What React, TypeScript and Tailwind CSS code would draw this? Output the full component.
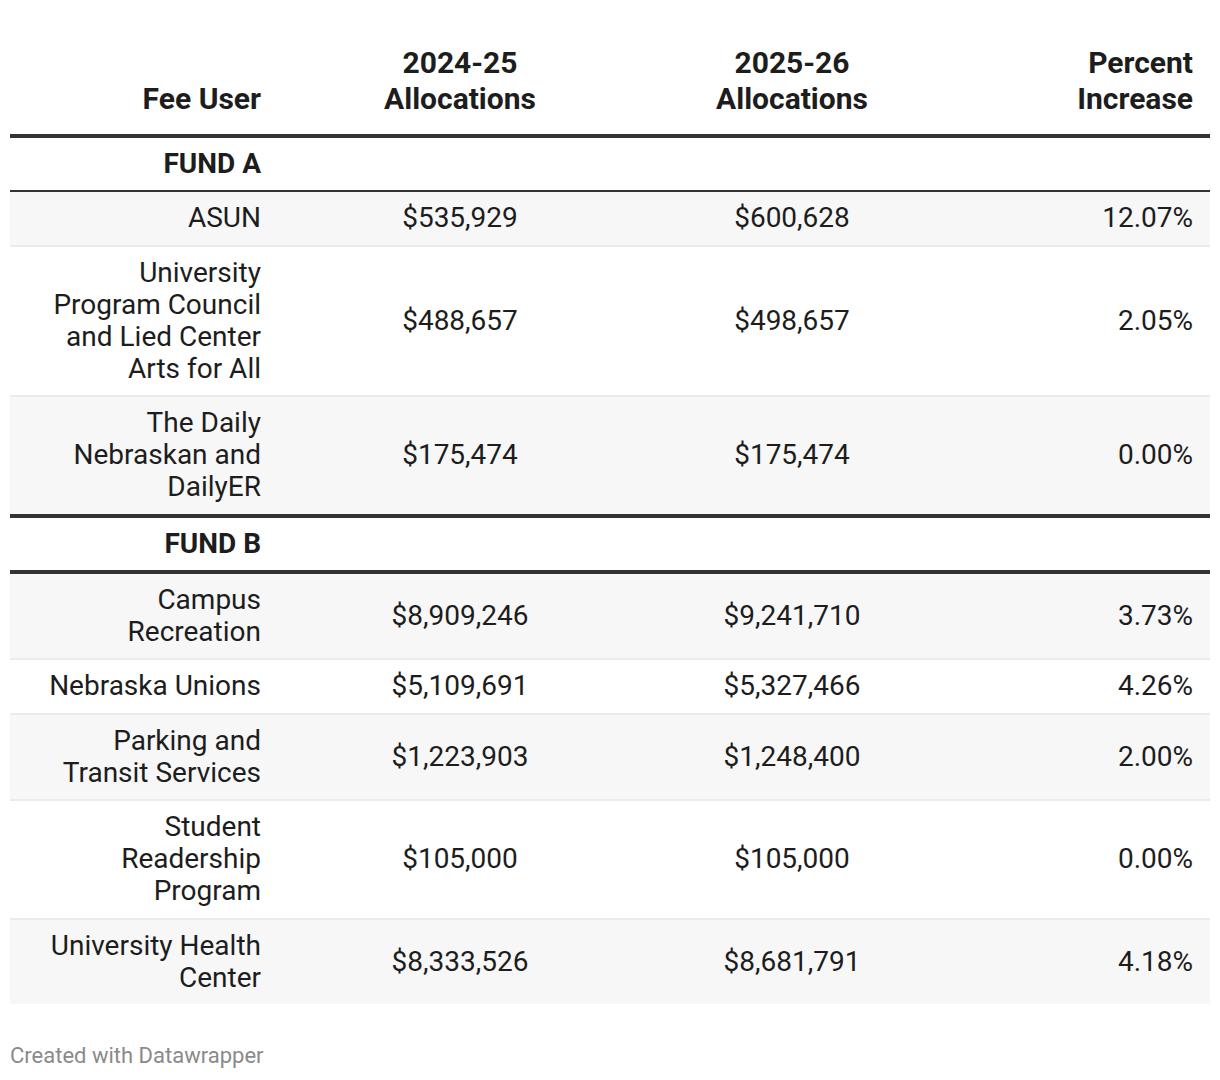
import React from "react";

type Row = { user: string[]; a: string; b: string; pct: string };

const fundA: Row[] = [
  { user: ["ASUN"], a: "$535,929", b: "$600,628", pct: "12.07%" },
  { user: ["University", "Program Council", "and Lied Center", "Arts for All"], a: "$488,657", b: "$498,657", pct: "2.05%" },
  { user: ["The Daily", "Nebraskan and", "DailyER"], a: "$175,474", b: "$175,474", pct: "0.00%" },
];

const fundB: Row[] = [
  { user: ["Campus", "Recreation"], a: "$8,909,246", b: "$9,241,710", pct: "3.73%" },
  { user: ["Nebraska Unions"], a: "$5,109,691", b: "$5,327,466", pct: "4.26%" },
  { user: ["Parking and", "Transit Services"], a: "$1,223,903", b: "$1,248,400", pct: "2.00%" },
  { user: ["Student", "Readership", "Program"], a: "$105,000", b: "$105,000", pct: "0.00%" },
  { user: ["University Health", "Center"], a: "$8,333,526", b: "$8,681,791", pct: "4.18%" },
];

const cols = "grid grid-cols-[284px_332px_332px_252px]";

function DataRow({ row, i, last }: { row: Row; i: number; last: boolean }) {
  return (
    <div
      className={`${cols} items-center text-[28px] leading-[32px] ${i % 2 === 0 ? "bg-[#f7f7f7]" : "bg-white"} ${last ? "" : "border-b-2 border-[#ebebeb]"}`}
    >
      <div className="py-[10.25px] pr-[33px] text-right whitespace-nowrap">
        {row.user.map((l) => (
          <div key={l}>{l}</div>
        ))}
      </div>
      <div className="text-center">{row.a}</div>
      <div className="text-center">{row.b}</div>
      <div className="text-right pr-[17px]">{row.pct}</div>
    </div>
  );
}

function FundHeader({ label }: { label: string }) {
  return (
    <div className={`${cols} text-[28px] leading-[32px] font-bold`}>
      <div className="py-[10px] pr-[33px] text-right">{label}</div>
      <div />
      <div />
      <div />
    </div>
  );
}

export default function App() {
  return (
    <div className="bg-white w-[1220px] h-[1080px] px-[10px] pt-[45px] text-[#1d1d1d]" style={{ fontFamily: "Roboto, 'Liberation Sans', sans-serif" }}>
      <div className={`${cols} items-end text-[30px] leading-[36px] font-bold pb-[17px] border-b-4 border-[#333]`}>
        <div className="pr-[33px] text-right">Fee User</div>
        <div className="text-center">2024-25<br />Allocations</div>
        <div className="text-center">2025-26<br />Allocations</div>
        <div className="pr-[17px] text-right">Percent<br />Increase</div>
      </div>

      <FundHeader label="FUND A" />
      <div className="border-t-2 border-[#333]">
        {fundA.map((r, i) => (
          <DataRow key={r.user.join(" ")} row={r} i={i} last={i === fundA.length - 1} />
        ))}
      </div>

      <div className="border-t-4 border-[#333]">
        <FundHeader label="FUND B" />
      </div>
      <div className="border-t-4 border-[#333]">
        {fundB.map((r, i) => (
          <DataRow key={r.user.join(" ")} row={r} i={i} last={i === fundB.length - 1} />
        ))}
      </div>

      <div className="mt-[39px] text-[22px] leading-[26px] text-[#8a8a8a]">Created with Datawrapper</div>
    </div>
  );
}
